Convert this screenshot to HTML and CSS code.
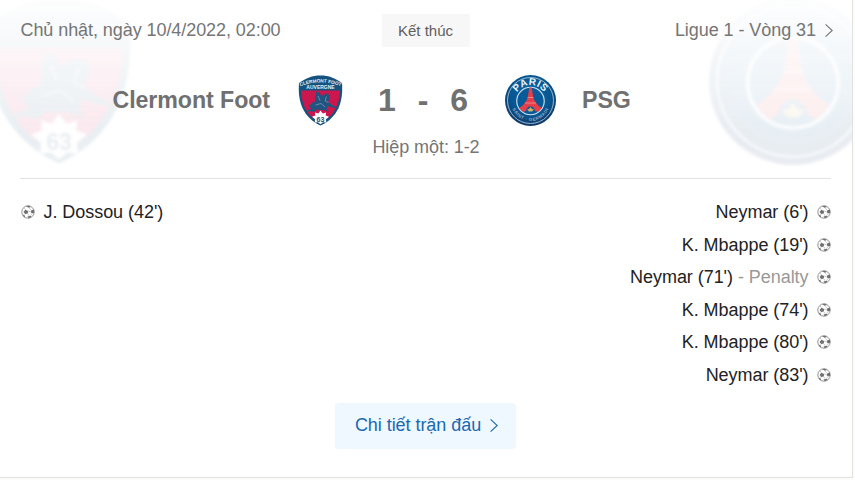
FILE: index.html
```html
<!DOCTYPE html>
<html lang="vi">
<head>
<meta charset="utf-8">
<title>Clermont Foot - PSG</title>
<link rel="stylesheet" href="styles.css">
</head>
<body>
<svg class="defs" aria-hidden="true">
  <defs>
    <radialGradient id="navy" cx="50%" cy="40%" r="60%">
      <stop offset="0" stop-color="#0769a8"/>
      <stop offset=".65" stop-color="#075691"/>
      <stop offset="1" stop-color="#123764"/>
    </radialGradient>
    <path id="arc-top" d="M19 52A32 32 0 0 1 83 52"/>
    <path id="arc-bottom" d="M12 53A39 39 0 0 0 90 53"/>
    <path id="arc-club" d="M9 23Q51 7 93 23"/>
    <symbol id="clermont" viewBox="0 0 102 102">
      <path fill="#15527e" d="M8 16C23 6 33 1 51 1s28 5 43 15c3 37-8 69-43 85C16 85 5 53 8 16z"/>
      <path fill="#cb174e" d="M12 31h78c0 24-11 46-25 56L51 80l-14 7C23 77 12 55 12 31z"/>
      <path fill="#21547f" d="M43 33L49 35 52 42 56 40 63 37 70 41 69 48 66 53 74 60 89 67 74 65 65 62 63 69 67 74 58 70 50 70 43 69 38 74 29 72 22 76 26 70 33 68 28 62 34 56 40 53 40 42z"/>
      <path fill="none" stroke="#7f9bb8" stroke-width="1.500" d="M46 42l4 9m13-8l-3 9 7 3m-26 5l11-3 8 7"/>
      <path fill="#fff" d="M51 71l4.500 6 6.500-2-.5 6 6.500 2.500-6 5 .5 6.500-6.500-.5-5 4-5-4-6.500.5.5-6.500-6-5 6.500-2.500-.5-6 6.500 2z"/>
      <text class="crest-text" x="51" y="93" font-size="14" fill="#1b5079" text-anchor="middle">63</text>
    </symbol>
    <symbol id="clermont-crest" viewBox="0 0 102 102">
      <use href="#clermont" width="102" height="102"/>
      <text class="crest-text" font-size="9.500" fill="#e3f0f6" text-anchor="middle"><textPath href="#arc-club" startOffset="50%">CLERMONT FOOT</textPath></text>
      <text class="crest-text" x="51" y="28" font-size="10" fill="#e3f0f6" text-anchor="middle">AUVERGNE</text>
    </symbol>
    <symbol id="psg" viewBox="0 0 102 102">
      <circle cx="51" cy="51" r="51" fill="url(#navy)"/>
      <circle cx="51" cy="51" r="46" fill="none" stroke="#a9c2da" stroke-width="1.800"/>
      <circle cx="51" cy="52" r="27.500" fill="#075b98" stroke="#d6e3ee" stroke-width="2.200"/>
      <path fill="#e63f49" d="M48.500 25h5l3 20c3 9 9 16 17 21l-8 8-5-2c-3-13-16-13-19 0l-5 2-8-8c8-5 14-12 17-21z"/>
      <path fill="none" stroke="#f5cbd0" stroke-width="1" d="M45 45h12M40 56h22"/>
      <path fill="#d4ae59" d="M51 64l3 4 4 1-4 4h-6l-4-4 4-1z"/>
    </symbol>
    <symbol id="psg-crest" viewBox="0 0 102 102">
      <use href="#psg" width="102" height="102"/>
      <text class="crest-text" font-size="20" fill="#edf4fa" text-anchor="middle" letter-spacing="1"><textPath href="#arc-top" startOffset="50%">PARIS</textPath></text>
      <text class="crest-text" font-size="9" fill="#8fabc9" text-anchor="middle" letter-spacing="1"><textPath href="#arc-bottom" startOffset="50%">SAINT · GERMAIN</textPath></text>
    </symbol>
    <symbol id="ball" viewBox="0 0 14 14">
      <circle cx="7" cy="7" r="6.200" fill="#fff" stroke="#888" stroke-width=".9"/>
      <path fill="#707070" d="M4.300 4.700l2.800 1.200-.3 2.700-2.700.5-1.500-2.200zM5 1l3-.2 2 1.200-2.300.8zM10.300 5.200l2.700-.7.200 3.300-2.200.8-1.200-1.500zM1.500 9.500l2 .8.8 2.200-1.600-.8zM6.500 11.400l3-.7 1 1.300-2.700 1.300z"/>
      <path fill="none" stroke="#aaa" stroke-width=".6" d="M4.300 4.700L3 2.600M7.100 5.900l2.700 1.200M6.800 8.600l1.200 2.200M4.100 9.100l-.6 1.200M7.700 2.800l2.600 2.400M11 8.600l-1.500 2.100"/>
    </symbol>
    <symbol id="chevron" viewBox="0 0 8 14">
      <path fill="none" stroke="currentColor" stroke-width="1.100" d="M.6.900L7.200 7 .6 13.100"/>
    </symbol>
  </defs>
</svg>

<main class="card">
  <div class="watermark watermark-home" aria-hidden="true"><svg><use href="#clermont"/></svg></div>
  <div class="watermark watermark-away" aria-hidden="true"><svg><use href="#psg"/></svg></div>

  <section class="summary">
    <header class="meta">
      <span class="date">Chủ nhật, ngày 10/4/2022, 02:00</span>
      <span class="status">Kết thúc</span>
      <a class="league">Ligue 1 - Vòng 31<svg class="chevron"><use href="#chevron"/></svg></a>
    </header>
    <div class="match">
      <span class="team team-home">Clermont Foot</span>
      <svg class="crest"><use href="#clermont-crest"/></svg>
      <div class="score"><span>1</span><span>-</span><span>6</span></div>
      <svg class="crest"><use href="#psg-crest"/></svg>
      <span class="team">PSG</span>
    </div>
    <div class="half">Hiệp một: 1-2</div>
  </section>

  <section class="goals">
    <ul>
      <li><svg class="ball"><use href="#ball"/></svg><span>J. Dossou (42')</span></li>
    </ul>
    <ul class="away">
      <li><span>Neymar (6')</span><svg class="ball"><use href="#ball"/></svg></li>
      <li><span>K. Mbappe (19')</span><svg class="ball"><use href="#ball"/></svg></li>
      <li><span>Neymar (71') <span class="note">- Penalty</span></span><svg class="ball"><use href="#ball"/></svg></li>
      <li><span>K. Mbappe (74')</span><svg class="ball"><use href="#ball"/></svg></li>
      <li><span>K. Mbappe (80')</span><svg class="ball"><use href="#ball"/></svg></li>
      <li><span>Neymar (83')</span><svg class="ball"><use href="#ball"/></svg></li>
    </ul>
  </section>

  <a class="details">Chi tiết trận đấu<svg class="chevron"><use href="#chevron"/></svg></a>
</main>
</body>
</html>
```
FILE: styles.css
```css
* {
  box-sizing: border-box;
}

body {
  margin: 0;
  height: 480px;
  overflow: hidden;
  background: #fcfcf8;
  font: 18px/22px "Liberation Sans", Arial, sans-serif;
  color: #222;
}

.defs {
  position: absolute;
  width: 0;
  height: 0;
}

.crest-text {
  font-family: "Liberation Sans", Arial, sans-serif;
  font-weight: bold;
}

.card {
  position: relative;
  width: 853px;
  height: 478px;
  padding: 0 21px 0 20px;
  overflow: hidden;
  background: #fff;
  border-right: 1px solid #e2e2e0;
  border-bottom: 1px solid #e2e2e0;
}

.watermark {
  position: absolute;
  top: -13px;
  padding: 10px;
  opacity: .09;
  -webkit-mask-image: linear-gradient(transparent, #000 75%);
  mask-image: linear-gradient(transparent, #000 75%);
}

.watermark svg {
  display: block;
  width: 168px;
  height: 168px;
  filter: blur(1.8px);
}

.watermark-home {
  left: -35px;
}

.watermark-away {
  left: 699px;
}

.summary {
  position: relative;
  height: 179px;
  padding-top: 14px;
  border-bottom: 1px solid #e3e3e3;
  color: #757575;
}

.meta {
  display: grid;
  grid-template-columns: 1fr 88px 1fr;
  align-items: center;
  height: 33px;
}

.date {
  padding: 0 0 2px .5px;
  letter-spacing: -.07px;
}

.status {
  height: 33px;
  background: #f7f7f7;
  color: #5f5f5f;
  font-size: 15px;
  line-height: 33px;
  text-align: center;
}

.league {
  display: flex;
  justify-content: flex-end;
  align-items: center;
  gap: 9px;
  height: 33px;
  margin-right: -2px;
  padding-bottom: 2px;
  letter-spacing: -.06px;
}

.chevron {
  width: 8px;
  height: 14px;
  transform: translateY(.5px);
}

.match {
  display: grid;
  grid-template-columns: 1fr 51px 159px 51px 1fr;
  align-items: center;
  height: 51px;
  margin-top: 28px;
}

.team {
  padding: 0 26px 1px;
  color: #707070;
  font-size: 23.2px;
  font-weight: bold;
  letter-spacing: -.07px;
  white-space: nowrap;
}

.team-home {
  padding-right: 25px;
  text-align: right;
}

.crest {
  width: 51px;
  height: 51px;
}

.score {
  display: flex;
  justify-content: center;
  gap: 22px;
  padding: 0 5px 2px 0;
  color: #707070;
  font-size: 32px;
  font-weight: bold;
}

.half {
  margin-top: 10px;
  padding-left: 1px;
  letter-spacing: -.07px;
  text-align: center;
}

.goals {
  display: flex;
  justify-content: space-between;
  height: 224px;
  padding-top: 17px;
}

.goals ul {
  margin: 0;
  padding: 0;
  list-style: none;
}

.goals li {
  display: flex;
  align-items: center;
  gap: 9px;
  height: 32.5px;
  letter-spacing: -.05px;
}

.goals ul:first-child li {
  padding-left: .5px;
}

.away li {
  justify-content: flex-end;
}

.away li > span {
  margin-right: -.5px;
}

.ball {
  width: 14px;
  height: 14px;
}

.note {
  color: #999;
}

.details {
  display: flex;
  justify-content: center;
  align-items: center;
  gap: 9px;
  width: 181px;
  height: 46px;
  margin: 0 auto;
  padding: 0 0 2px 2px;
  background: #f0f8ff;
  border-radius: 4px;
  color: #1a69b0;
  letter-spacing: -.05px;
}
```
